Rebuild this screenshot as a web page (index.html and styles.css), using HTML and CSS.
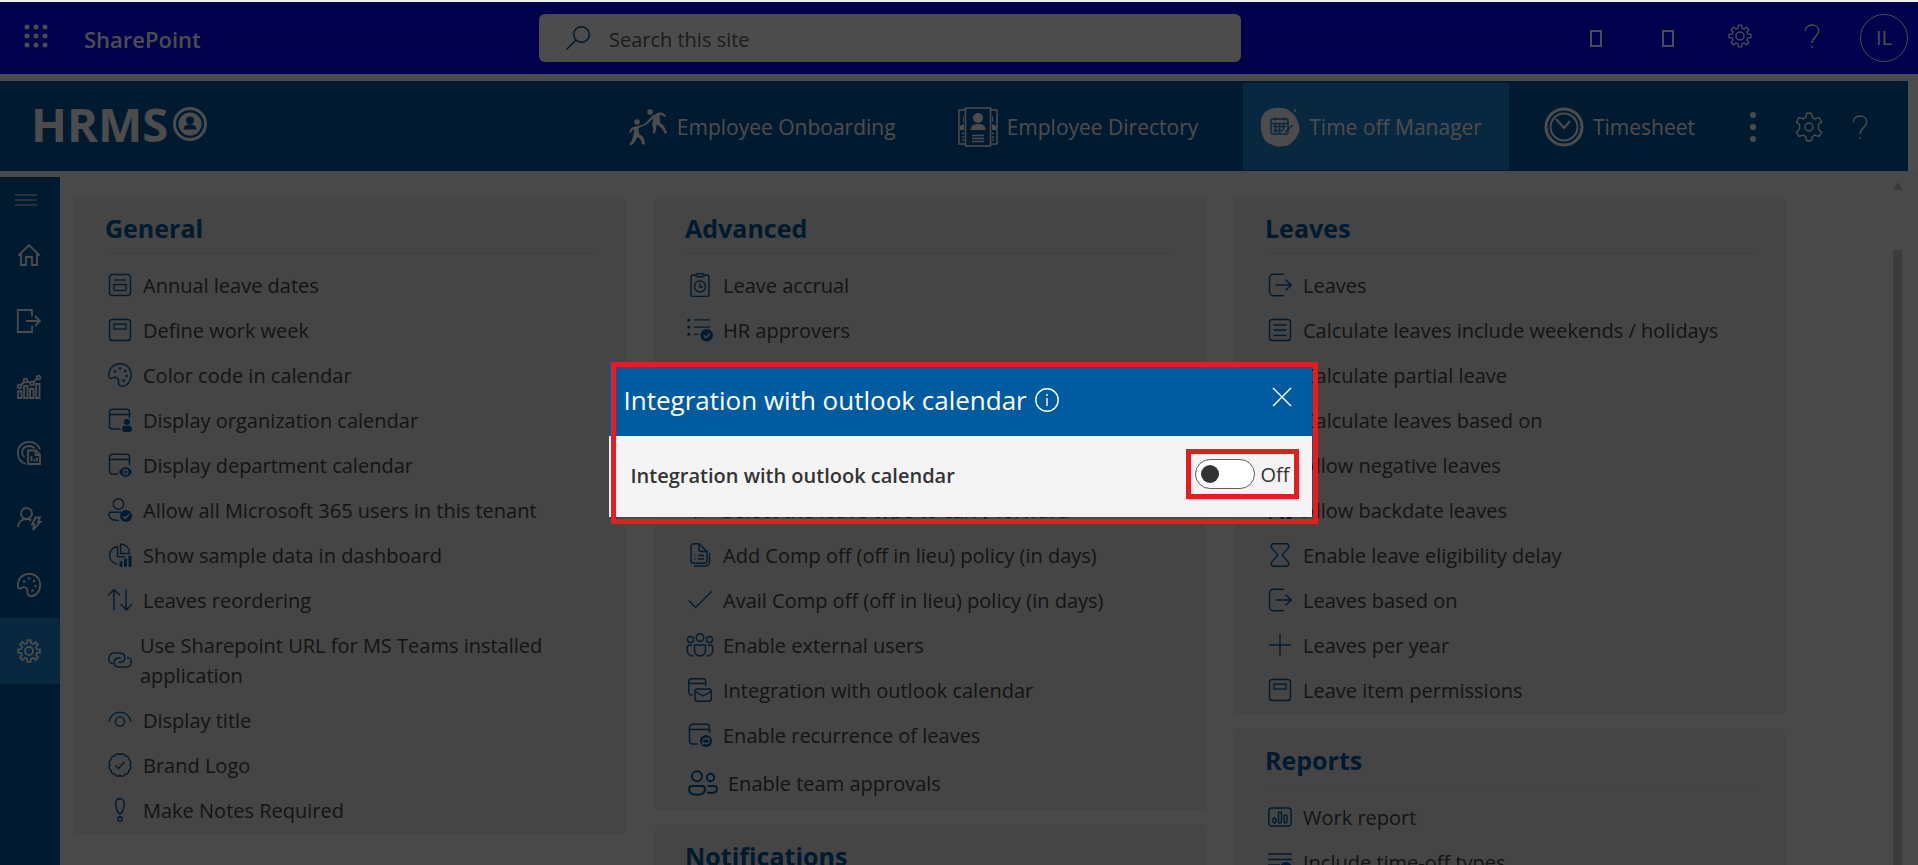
FILE: index.html
```html
<!DOCTYPE html>
<html lang="en">
<head>
<meta charset="utf-8">
<title>HRMS - Time off Manager</title>
<link rel="stylesheet" href="styles.css">
</head>
<body>
<svg class="sprite" aria-hidden="true">
  <symbol id="gear" viewBox="0 0 24 24">
    <g id="gear-teeth">
      <path id="tooth" d="M8.94 4.61L10.06 4.2L10.3 1.1H13.7L13.94 4.2L15.06 4.61"/>
      <use href="#tooth" transform="rotate(45 12 12)"/><use href="#tooth" transform="rotate(90 12 12)"/>
      <use href="#tooth" transform="rotate(135 12 12)"/><use href="#tooth" transform="rotate(180 12 12)"/>
      <use href="#tooth" transform="rotate(225 12 12)"/><use href="#tooth" transform="rotate(270 12 12)"/>
      <use href="#tooth" transform="rotate(315 12 12)"/>
    </g>
    <circle cx="12" cy="12" r="4"/>
  </symbol>
  <symbol id="cog" viewBox="0 0 30 30">
    <path d="M12.6 1.2h4.8l.9 4.2 2.6 1.5 4.1-1.3 2.6 4.2-3.2 2.9v4.600l3.2 2.9-2.6 4.2-4.1-1.3-2.6 1.5-.9 4.2h-4.8l-.9-4.2-2.6-1.5-4.1 1.3-2.6-4.2 3.2-2.9v-4.600L2.4 9.8 5 5.6l4.1 1.3 2.6-1.5z"/>
    <circle cx="15" cy="15" r="4"/>
  </symbol>
  <symbol id="help" viewBox="0 0 16 24">
    <path d="M1.2 7.2C1.2 3.5 4 1 8 1s6.8 2.500 6.800 6c0 5-6.800 6-6.800 12"/><path d="M8 22v2"/>
  </symbol>
  <symbol id="cal-box" viewBox="0 0 24 24">
    <rect x="1.500" y="1.500" width="21" height="21" rx="3"/><path d="M6 7h12"/><rect x="6" y="11.500" width="12" height="6"/>
  </symbol>
  <symbol id="cal-week" viewBox="0 0 24 24">
    <rect x="1.500" y="1.500" width="21" height="21" rx="3"/><rect x="6" y="6" width="12" height="5"/>
  </symbol>
  <symbol id="palette" viewBox="0 0 24 24">
    <path d="M.8 11.500C1 5 6 .8 12.200 .8c6.500 0 11 4.800 11 11 0 6.400-4 11.400-9 11.400-3 0-3.800-2.200-3.700-4.400.1-2.800-1-4.600-3.500-4.600-2.200 0-2.800 1.600-4.400 1.400C1.200 15.400.8 13.600.8 11.500z"/>
    <g class="solid"><circle cx="7" cy="8.500" r="1.300"/><circle cx="12" cy="5.500" r="1.300"/><circle cx="17" cy="8" r="1.300"/><circle cx="18.600" cy="13" r="1.300"/><circle cx="15.500" cy="17.500" r="1.300"/></g>
  </symbol>
  <symbol id="cal-person" viewBox="0 0 24 24">
    <path d="M12.500 21H4.500a3 3 0 0 1-3-3V4.200a3 3 0 0 1 3-3h14a3 3 0 0 1 3 3V10M1.500 6.500h20"/>
    <g class="solid"><circle cx="19" cy="14" r="3"/><rect x="14" y="17.800" width="10" height="6.200" rx="3"/></g>
  </symbol>
  <symbol id="cal-eye" viewBox="0 0 24 24">
    <path d="M10 21H4.500a3 3 0 0 1-3-3V4.200a3 3 0 0 1 3-3h14a3 3 0 0 1 3 3V12M1.500 6.500h20"/>
    <path class="solid" d="M11 19c1.400-3 3.800-4.800 6.600-4.800S22.700 16 24 19c-1.300 3-3.700 4.800-6.400 4.800S12.400 22 11 19z"/><circle class="hole" cx="17.600" cy="19" r="3"/><circle class="solid" cx="17.600" cy="19" r="1.600"/>
  </symbol>
  <symbol id="user-check" viewBox="0 0 24 24">
    <circle cx="10.500" cy="6" r="5.200"/><path d="M11 22.500C5 22.500.8 20.500.8 16.500c0-1.400.8-2.300 2.200-2.300h10"/>
    <circle class="solid" cx="18" cy="18" r="6"/><path class="inverse" d="M15 18.200l2.200 2.200 4-4.200"/>
  </symbol>
  <symbol id="pie" viewBox="0 0 24 24">
    <path d="M9.500 3.500C5 4 1.500 7.500 1.500 12c0 4.300 3 8 7.500 9M9.500 3.500v10.300H17M12.500 1v9.500h9C21.500 5 18 1.300 12.500 1z"/>
    <g class="solid"><rect x="11.500" y="18" width="3" height="6" rx="1"/><rect x="16" y="15.500" width="3" height="8.500" rx="1"/><rect x="20.500" y="12.500" width="3" height="11.500" rx="1"/></g>
  </symbol>
  <symbol id="sort" viewBox="0 0 24 24"><path d="M6 22V1.500M0 7.500l6-6 6 6M18 1v21M12.500 16l6 6 5.500-6"/></symbol>
  <symbol id="link" viewBox="0 0 24 24">
    <path d="M5 15.500C2.500 15.500.7 13.500.7 11S2.500 5 5.500 5H12c3 0 4.800 2 4.800 4.600 0 2.700-1.800 4.600-4.800 4.600h-1.500"/>
    <path d="M19 9.500c2.500 0 4.300 2 4.300 4.500s-1.800 5-4.800 5H11c-3 0-4.800-2-4.800-4.600C6.200 11.700 8 10 11 10h2"/>
  </symbol>
  <symbol id="eye" viewBox="0 0 24 24"><path d="M1.200 14C2 7.500 6.500 4.200 12 4.200S22 7.500 22.800 14"/><circle cx="12" cy="13.500" r="4.600"/></symbol>
  <symbol id="badge" viewBox="0 0 24 24">
    <path d="M12 1.800c1.500-1.600 4.200-1.200 5 .9 2.200-.2 4.100 1.700 3.900 3.900 2 .9 2.600 3.600 1.100 5.400 1.500 1.800.9 4.500-1.100 5.400.2 2.200-1.700 4.100-3.900 3.900-.8 2.100-3.500 2.500-5 .9-1.500 1.600-4.200 1.200-5-.9-2.200.2-4.100-1.700-3.900-3.900-2-.9-2.600-3.600-1.100-5.400C.5 10.200 1.100 7.500 3.100 6.600 2.900 4.400 4.800 2.500 7 2.700c.8-2.100 3.500-2.500 5-.9z"/><path d="M7.500 12.500l3 3 6-6.500"/>
  </symbol>
  <symbol id="bang" viewBox="0 0 24 24"><path d="M12 .8c-2.600 0-4.200 1.900-4.200 4.600 0 3.600 1.600 10.400 4.200 10.400s4.200-6.800 4.200-10.400C16.200 2.700 14.600.8 12 .8z"/><circle cx="12" cy="21" r="2.200"/></symbol>
  <symbol id="clip-clock" viewBox="0 0 24 24">
    <path d="M8 2H5a2 2 0 0 0-2 2v17.500a2 2 0 0 0 2 2h14a2 2 0 0 0 2-2V4a2 2 0 0 0-2-2h-3"/><rect x="8" y=".7" width="8" height="3" rx="1.500"/><circle cx="12" cy="13.500" r="5.500"/><path d="M12 10.500v3.500h3"/>
  </symbol>
  <symbol id="list-check" viewBox="0 0 27 25">
    <path d="M7 2h17M7 9.500h17M7 17h5"/><g class="solid"><circle cx="1.800" cy="2" r="1.600"/><circle cx="1.800" cy="9.500" r="1.600"/><circle cx="1.800" cy="17" r="1.600"/><circle cx="20.500" cy="18" r="6.500"/></g><path class="inverse" d="M17.500 18.300l2.300 2.300 4-4.300"/>
  </symbol>
  <symbol id="docs" viewBox="0 0 24 24">
    <path d="M11 .8H5.500a2.500 2.500 0 0 0-2.500 2.500v14.500a2.500 2.500 0 0 0 2.500 2.500h11a2.500 2.500 0 0 0 2.500-2.500V8.500zM11 .8v5.700a2 2 0 0 0 2 2h6M21.500 10v9a4 4 0 0 1-4 4H6M6.500 12.500h1M10 12.500h6M6.500 16h1M10 16h6"/>
  </symbol>
  <symbol id="check" viewBox="0 0 24 24"><path d="M.8 12.500l6.700 7L23.500 3.500"/></symbol>
  <symbol id="people" viewBox="0 0 27 24">
    <circle cx="13.500" cy="4.500" r="3.800"/><circle cx="4" cy="6.500" r="3"/><circle cx="23" cy="6.500" r="3"/>
    <path d="M8 12h11v5.500a5.500 5.500 0 0 1-11 0zM5.500 12H3a2.200 2.200 0 0 0-2.200 2.200v3.300c0 3.500 2.700 6 6.700 5.500M21.500 12H24a2.200 2.200 0 0 1 2.200 2.200v3.300c0 3.500-2.700 6-6.700 5.500"/>
  </symbol>
  <symbol id="cal-mail" viewBox="0 0 24 24">
    <path d="M4.500 17H3.500a2.700 2.700 0 0 1-2.700-2.700V3.500A2.700 2.700 0 0 1 3.500.8h11.500a2.700 2.700 0 0 1 2.700 2.700V8M.8 5.500h17"/><rect x="7" y="11" width="16.300" height="12.200" rx="2.500"/><path d="M7.500 13.500l7.500 4.500 8-4.500"/>
  </symbol>
  <symbol id="cal-sync" viewBox="0 0 24 24">
    <path d="M10 21H4.500a3 3 0 0 1-3-3V4.200a3 3 0 0 1 3-3h14a3 3 0 0 1 3 3V10M1.500 6.500h20"/><circle class="solid" cx="18" cy="18" r="6"/><path class="inverse" d="M15 17.200c1.200-2.300 4.500-2.300 6-.4v-2M21 19c-1.200 2.300-4.500 2.300-6 .4v2"/>
  </symbol>
  <symbol id="team" viewBox="0 0 30 26">
    <circle cx="9" cy="6.200" r="5"/><circle cx="22.500" cy="7.500" r="3.700"/><path d="M4 16h10a3 3 0 0 1 3 3c0 3.500-3 5.800-8 5.800S1 22.500 1 19a3 3 0 0 1 3-3zM19.500 16H26a3 3 0 0 1 3 2.700c0 2.600-2.300 4.300-6 4.300-1.500 0-2.800-.3-3.800-.8"/>
  </symbol>
  <symbol id="exit" viewBox="0 0 24 24"><path d="M16 1.200H5.500A4 4 0 0 0 1.500 5.200v13.600a4 4 0 0 0 4 4H16M7.500 12h15.700M17.500 6.500l5.700 5.500-5.700 5.500"/></symbol>
  <symbol id="lines" viewBox="0 0 24 24"><rect x="1.500" y="1.500" width="21" height="21" rx="3"/><path d="M5.500 7h13M5.500 12h13M5.500 17.500h13"/></symbol>
  <symbol id="hourglass" viewBox="0 0 24 24"><path d="M5.500.8h13a2.200 2.200 0 0 1 2.200 2.300c0 4.400-6.200 6.400-6.200 8.900s6.200 4.500 6.200 8.900a2.200 2.200 0 0 1-2.200 2.300h-13a2.200 2.200 0 0 1-2.200-2.300C3.300 16.500 9.500 14.500 9.500 12S3.300 7.500 3.300 3.100A2.200 2.200 0 0 1 5.500.8z"/></symbol>
  <symbol id="plus" viewBox="0 0 24 24"><path d="M12 1v22M1 12h22"/></symbol>
  <symbol id="chart-box" viewBox="0 0 24 24"><rect x=".8" y="3" width="22.400" height="18" rx="3"/><rect x="5" y="13" width="3" height="5" rx="1.500"/><rect x="10.500" y="7" width="3" height="11" rx="1.500"/><rect x="16" y="10" width="3" height="8" rx="1.500"/></symbol>
  <symbol id="types" viewBox="0 0 24 24"><path d="M0 4h24M0 9.500h24M0 15h12"/><circle class="solid" cx="18" cy="18" r="6"/></symbol>
</svg>

<div class="strip"></div>
<div class="app">
  <header class="topbar">
    <div class="brand">
      <button class="icon-btn" aria-label="App launcher"><svg class="waffle" viewBox="0 0 24 24"><circle cx="3" cy="3" r="2.500"/><circle cx="12" cy="3" r="2.500"/><circle cx="21" cy="3" r="2.500"/><circle cx="3" cy="12" r="2.500"/><circle cx="12" cy="12" r="2.500"/><circle cx="21" cy="12" r="2.500"/><circle cx="3" cy="21" r="2.500"/><circle cx="12" cy="21" r="2.500"/><circle cx="21" cy="21" r="2.500"/></svg></button>
      <a class="brand-name" href="#">SharePoint</a>
    </div>
    <label class="search">
      <svg class="search-icon" viewBox="0 0 24 24"><circle cx="15.500" cy="8.500" r="7.800"/><path d="M10 14L.5 23.500"/></svg>
      <input class="search-input" type="search" placeholder="Search this site" aria-label="Search this site">
    </label>
    <div class="top-actions">
      <button class="icon-btn" aria-label="Chat"><svg class="blank-glyph" viewBox="0 0 12 17"><rect x="1" y="1" width="10" height="15"/></svg></button>
      <button class="icon-btn" aria-label="Announcements"><svg class="blank-glyph" viewBox="0 0 12 17"><rect x="1" y="1" width="10" height="15"/></svg></button>
      <button class="icon-btn raised" aria-label="Settings"><svg class="i24"><use href="#gear"/></svg></button>
      <button class="icon-btn raised" aria-label="Help"><svg class="i-help"><use href="#help"/></svg></button>
      <button class="avatar">IL</button>
    </div>
  </header>

  <div class="hr-bar">
    <a class="logo" href="#">HRMS
      <svg class="logo-mark" viewBox="0 0 34 34"><circle cx="17" cy="17" r="15.500"/><circle class="logo-disc" cx="17" cy="17" r="11.500"/><circle class="logo-person" cx="17" cy="13.500" r="4"/><path class="logo-person" d="M10.500 22.500c0-3.500 2.500-5 6.500-5s6.500 1.500 6.500 5z"/></svg>
    </a>
    <nav class="nav">
      <a class="nav-item" href="#"><svg class="nav-icon" viewBox="0 0 40 40"><g class="solid"><circle cx="22" cy="5" r="2.800"/><circle cx="9" cy="15" r="2.800"/><path d="M24 9l6-3.200c4-.8 6.500.4 8 3.200l-1.200 1.200C35 8.500 33.500 8 31.500 8.500l.5 7c3 1.800 5 5 7.200 10.500l-2.400.8C35 22.500 33 20 29.500 18l-1.500.5c.5 2.500.3 5-1.200 8l-2.300-.8c1-3 .8-5-.5-8l1.500-6.500-6.500 6c-3 1.500-6 2.500-8.500 4l.8 6c3.500 1.500 5.200 4.500 5.700 10l-2.800.3c-.7-4-2-6.300-5-7.500-1.300 4-3 6.500-6.200 8.500L1.200 37c3-3 4-6 5-15-2 .8-2.700 2-3 4l-1.700-.3C1.500 22 4 19.500 9 19.200c3-.2 6-1.700 9-3.700z"/></g></svg>Employee Onboarding</a>
      <a class="nav-item" href="#"><svg class="nav-icon" viewBox="0 0 40 40"><path class="thin" d="M7 3H1v34h6M33 3h6v34h-6"/><rect class="thin" x="7.500" y="1" width="25" height="38"/><g class="solid"><circle cx="20" cy="11" r="5"/><path d="M12.500 23c0-4 2.500-6 7.500-6s7.500 2 7.500 6z"/><path d="M2 23v-4l4-2v6zM38 23v-4l-4-2v6zM5 9.500h1v5H5zM34 9.500h1v5h-1z"/></g><path class="thin" d="M14 28.500h12M14 31.500h12M14 34.500h12M4 26.500h2M4 30h2M4 33h2M34 26.500h2M34 30h2M34 33h2"/></svg>Employee Directory</a>
      <a class="nav-item nav-active" href="#"><svg class="nav-icon" viewBox="0 0 40 40"><path class="solid" d="M12 1.500C16 .5 26 0 31 5c5 4 8 10 8.500 17-.5 6-5 12-11 16-6 2-14 2-18-1C4 35 2 29 1 22 0 14 1 4 12 1.500z"/><circle class="solid" cx="35" cy="3.500" r="1.200"/><g class="on-light"><rect x="11" y="12" width="17" height="15" rx="2"/><path d="M11 16.500h17M15 10.500v3M24 10.500v3M13 19.500h13M13 23.500h10M15.500 17v9M19.500 17v9M23.500 17v6M33 18l-8 7"/></g></svg>Time off Manager</a>
      <a class="nav-item" href="#"><svg class="nav-icon" viewBox="0 0 40 40"><circle class="ring" cx="20" cy="20" r="18"/><circle class="ring-in" cx="20" cy="20" r="13.500"/><path class="ring-in" d="M12 12l8 9 6-7"/></svg>Timesheet</a>
      <button class="icon-btn more" aria-label="More"><svg class="dots" viewBox="0 0 8 30"><circle cx="4" cy="3" r="3"/><circle cx="4" cy="15" r="3"/><circle cx="4" cy="27" r="3"/></svg></button>
      <button class="icon-btn" aria-label="App settings"><svg class="i30"><use href="#cog"/></svg></button>
      <button class="icon-btn" aria-label="App help"><svg class="i-help"><use href="#help"/></svg></button>
    </nav>
  </div>

  <div class="body">
    <nav class="side" aria-label="Sections">
      <button class="side-toggle" aria-label="Toggle menu"><svg class="burger" viewBox="0 0 22 12"><path d="M0 1h22M0 6h22M0 11h22"/></svg></button>
      <a class="side-item" href="#" aria-label="Home"><svg class="i24" viewBox="0 0 24 24"><path d="M1.500 12.500L12 2l10.500 10.500M4 10.500V22h5v-8h6v8h5V10.500"/></svg></a>
      <a class="side-item" href="#" aria-label="Leaves"><svg class="i24" viewBox="0 0 24 24"><path d="M15 7.500V1H.8v22H15v-6.500M9 12h14M18 7l5 5-5 5"/></svg></a>
      <a class="side-item" href="#" aria-label="Analytics"><svg class="i24" viewBox="0 0 24 24"><path d="M1 23v-6.500h3.500V23zM7 23V11h3.500v12zM13 23v-9h3.500v9zM19 23V9h3.500v14z"/><circle cx="2.500" cy="11.500" r="1.800"/><circle cx="8.500" cy="5.500" r="1.800"/><circle cx="15" cy="8.500" r="1.800"/><circle cx="21.500" cy="2.500" r="1.800"/><path d="M4 10l3-3M10.500 6.500l3 1.500M16.500 7l3.500-3.500"/></svg></a>
      <a class="side-item" href="#" aria-label="Reports"><svg class="i24" viewBox="0 0 24 24"><path d="M9 23C4 21.500.8 17.500.8 12 .8 5.500 5.500.8 12 .8c5.500 0 9.500 3 11 8M7.500 16C6 15 5 13.500 5 11.500 5 7.500 8 5 12 5c2.500 0 4.500 1 5.500 2.500M12 9.500h7l4 4V23H11V9.500zM18.500 9.500v4.500H23M14.500 20.500V15M17.500 20.500V18M20 20.500v-4"/></svg></a>
      <a class="side-item" href="#" aria-label="Users"><svg class="i24" viewBox="0 0 24 24"><circle cx="9.500" cy="6.500" r="5.500"/><path d="M1 20c0-5 3.500-8 8.500-8 2 0 3.500.5 4.500 1.500M18.500 10.500h4.500l-2 4.500h2.500L16 23l1.500-5.500H15z"/></svg></a>
      <a class="side-item" href="#" aria-label="Theme"><svg class="i24"><use href="#palette"/></svg></a>
      <a class="side-item side-active" href="#" aria-label="Settings"><svg class="i24"><use href="#gear"/></svg></a>
    </nav>

    <main class="content">
      <div class="column">
        <section class="card">
          <h2 class="card-title">General</h2>
          <ul class="items">
            <li class="item"><svg class="item-icon"><use href="#cal-box"/></svg><a href="#">Annual leave dates</a></li>
            <li class="item"><svg class="item-icon"><use href="#cal-week"/></svg><a href="#">Define work week</a></li>
            <li class="item"><svg class="item-icon"><use href="#palette"/></svg><a href="#">Color code in calendar</a></li>
            <li class="item"><svg class="item-icon"><use href="#cal-person"/></svg><a href="#">Display organization calendar</a></li>
            <li class="item"><svg class="item-icon"><use href="#cal-eye"/></svg><a href="#">Display department calendar</a></li>
            <li class="item"><svg class="item-icon"><use href="#user-check"/></svg><a href="#">Allow all Microsoft 365 users in this tenant</a></li>
            <li class="item"><svg class="item-icon"><use href="#pie"/></svg><a href="#">Show sample data in dashboard</a></li>
            <li class="item"><svg class="item-icon"><use href="#sort"/></svg><a href="#">Leaves reordering</a></li>
            <li class="item item-tight"><svg class="item-icon"><use href="#link"/></svg><a href="#">Use Sharepoint URL for MS Teams installed application</a></li>
            <li class="item"><svg class="item-icon"><use href="#eye"/></svg><a href="#">Display title</a></li>
            <li class="item"><svg class="item-icon"><use href="#badge"/></svg><a href="#">Brand Logo</a></li>
            <li class="item"><svg class="item-icon"><use href="#bang"/></svg><a href="#">Make Notes Required</a></li>
          </ul>
        </section>
      </div>
      <div class="column">
        <section class="card">
          <h2 class="card-title">Advanced</h2>
          <ul class="items">
            <li class="item"><svg class="item-icon"><use href="#clip-clock"/></svg><a href="#">Leave accrual</a></li>
            <li class="item"><svg class="item-icon"><use href="#list-check"/></svg><a href="#">HR approvers</a></li>
            <li class="item item-after-gap"><svg class="item-icon"><use href="#check"/></svg><a href="#">Select the leave type to carry forward</a></li>
            <li class="item"><svg class="item-icon"><use href="#docs"/></svg><a href="#">Add Comp off (off in lieu) policy (in days)</a></li>
            <li class="item"><svg class="item-icon"><use href="#check"/></svg><a href="#">Avail Comp off (off in lieu) policy (in days)</a></li>
            <li class="item"><svg class="item-icon"><use href="#people"/></svg><a href="#">Enable external users</a></li>
            <li class="item"><svg class="item-icon"><use href="#cal-mail"/></svg><a href="#">Integration with outlook calendar</a></li>
            <li class="item"><svg class="item-icon"><use href="#cal-sync"/></svg><a href="#">Enable recurrence of leaves</a></li>
            <li class="item item-large"><svg class="item-icon"><use href="#team"/></svg><a href="#">Enable team approvals</a></li>
          </ul>
        </section>
        <section class="card">
          <h2 class="card-title">Notifications</h2>
        </section>
      </div>
      <div class="column">
        <section class="card">
          <h2 class="card-title">Leaves</h2>
          <ul class="items">
            <li class="item"><svg class="item-icon"><use href="#exit"/></svg><a href="#">Leaves</a></li>
            <li class="item"><svg class="item-icon"><use href="#lines"/></svg><a href="#">Calculate leaves include weekends / holidays</a></li>
            <li class="item"><svg class="item-icon"><use href="#lines"/></svg><a href="#">Calculate partial leave</a></li>
            <li class="item"><svg class="item-icon"><use href="#lines"/></svg><a href="#">Calculate leaves based on</a></li>
            <li class="item"><svg class="item-icon"><use href="#user-check"/></svg><a href="#">Allow negative leaves</a></li>
            <li class="item"><svg class="item-icon"><use href="#user-check"/></svg><a href="#">Allow backdate leaves</a></li>
            <li class="item"><svg class="item-icon"><use href="#hourglass"/></svg><a href="#">Enable leave eligibility delay</a></li>
            <li class="item"><svg class="item-icon"><use href="#exit"/></svg><a href="#">Leaves based on</a></li>
            <li class="item"><svg class="item-icon"><use href="#plus"/></svg><a href="#">Leaves per year</a></li>
            <li class="item"><svg class="item-icon"><use href="#cal-week"/></svg><a href="#">Leave item permissions</a></li>
          </ul>
        </section>
        <section class="card">
          <h2 class="card-title">Reports</h2>
          <ul class="items">
            <li class="item"><svg class="item-icon"><use href="#chart-box"/></svg><a href="#">Work report</a></li>
            <li class="item"><svg class="item-icon"><use href="#types"/></svg><a href="#">Include time-off types</a></li>
          </ul>
        </section>
      </div>
      <div class="scroll"><span class="scroll-up"></span><span class="scroll-thumb"></span></div>
    </main>
  </div>

  <div class="overlay">
    <div class="dialog" role="dialog" aria-labelledby="dialog-title">
      <div class="dialog-head">
        <h1 class="dialog-title" id="dialog-title">Integration with outlook calendar</h1>
        <button class="icon-btn" aria-label="Information"><svg class="i24" viewBox="0 0 24 24"><circle cx="12" cy="12" r="11.200"/><path d="M12 10v8"/><path d="M12 6v2"/></svg></button>
        <button class="icon-btn dialog-close" aria-label="Close"><svg class="i-close" viewBox="0 0 18 18"><path d="M0 0l18 18M18 0L0 18"/></svg></button>
      </div>
      <div class="dialog-body">
        <label class="setting" for="outlook">Integration with outlook calendar</label>
        <div class="switch-frame">
          <input class="switch" type="checkbox" role="switch" id="outlook"><span class="switch-state">Off</span>
        </div>
      </div>
      <div class="highlight"></div>
    </div>
  </div>
</div>
</body>
</html>
```
FILE: styles.css
```css
* { box-sizing: border-box; }
html, body { height: 100%; margin: 0; }
body {
  display: flex;
  flex-direction: column;
  overflow: hidden;
  background: #fff;
  color: #444;
  font: 20px/30px "Segoe UI", "Open Sans", sans-serif;
}
a { color: inherit; text-decoration: none; }
svg { display: block; flex: none; overflow: visible; fill: none; stroke: currentColor; stroke-width: 1.4; }
.sprite { position: absolute; width: 0; height: 0; }
.solid { fill: currentColor; stroke: none; }
.hole { fill: #e6e6e6; stroke: none; }
.inverse { stroke: #e6e6e6; stroke-width: 1.6; }
.i24 { width: 24px; height: 24px; }
.i30 { width: 30px; height: 30px; }
.i-help { width: 16px; height: 24px; }
.i-close { width: 18px; height: 18px; }
.icon-btn { padding: 0; border: 0; background: none; color: inherit; }

.strip { flex: none; height: 2px; background: #ececf8; }
.app { position: relative; flex: 1; min-height: 0; display: flex; flex-direction: column; overflow: hidden; }

.topbar {
  flex: none;
  display: grid;
  grid-template-columns: 28.1% 36.6% 1fr;
  align-items: center;
  height: 72px;
  background: #00f;
  color: #fff;
}
.brand { display: flex; align-items: center; gap: 36px; padding-left: 24px; }
.waffle { width: 24px; height: 24px; fill: #fff; stroke: none; }
.brand .icon-btn, .raised { padding-bottom: 4px; }
.brand-name { padding-top: 2px; font-size: 22px; font-weight: 600; }
.search { display: flex; align-items: center; height: 48px; padding-left: 27px; gap: 19px; border-radius: 6px; background: #fff; color: #004578; }
.search-icon { width: 24px; height: 24px; }
.search-input { flex: 1; padding: 3px 0 0; border: 0; outline: 0; background: none; font: inherit; color: #605e5c; }
.search-input::placeholder { color: #605e5c; opacity: 1; }
.top-actions { display: flex; align-items: center; justify-content: flex-end; padding-right: 10px; }
.top-actions .icon-btn { display: flex; justify-content: center; width: 72px; }
.blank-glyph { width: 12px; height: 17px; stroke-width: 2; }
.avatar { width: 48px; height: 48px; margin-left: 12px; padding: 0; border: 1px solid #fff; border-radius: 50%; background: none; color: #fff; font: inherit; }

.hr-bar { flex: none; display: flex; justify-content: space-between; align-items: center; height: 90px; margin: 7px 10px 0 0; padding: 2px 40px 1px 31px; background: #005a9e; color: #fff; }
.logo { display: flex; align-items: center; gap: 5px; padding-bottom: 5px; font-size: 47px; font-weight: 700; }
.logo-mark { width: 34px; height: 34px; stroke-width: 3; }
.logo-disc { fill: #fff; stroke: none; }
.logo-person { fill: #005a9e; stroke: none; }
.nav { display: flex; align-items: center; align-self: stretch; }
.nav-item { display: flex; align-items: center; gap: 9px; align-self: stretch; padding: 0 27px 0 17px; margin-right: 18px; font-size: 21px; }
.nav-active { background: #1a86d0; }
.nav-icon { width: 40px; height: 40px; }
.thin { stroke-width: 1.5; }
.ring { stroke-width: 3; }
.ring-in { stroke-width: 2; }
.on-light { stroke: #1a86d0; stroke-width: 1.5; }
.more { margin: 0 37px 0 9px; }
.dots { width: 8px; height: 30px; fill: #fff; stroke: none; }
.nav .i-help { margin-left: 28px; }

.body { flex: 1; min-height: 0; display: flex; background: #f4f4f4; }
.side { flex: none; width: 60px; margin-top: 6px; background: #005a9e; color: #fff; }
.side-toggle { display: block; height: 45px; padding: 0 0 0 15px; border: 0; background: none; color: inherit; }
.burger { width: 22px; height: 12px; stroke-width: 1; }
.side-item { display: flex; align-items: center; height: 66px; padding-left: 17px; }
.side-item svg { stroke-width: 1.8; }
.side-active { background: #1a86d0; }

.content { flex: 1; display: flex; align-items: flex-start; gap: 30px; padding: 26px 0 0 15px; }
.column { flex: 1 1 550px; display: flex; flex-direction: column; gap: 15px; }
.card { background: #e6e6e6; padding: 0 30px; }
.card-title { margin: 0 0 10px; padding: 16px 0 10px; border-bottom: 1px solid #d8d8d8; color: #005a9e; font-size: 25px; line-height: 30px; font-weight: 700; }
.items { list-style: none; margin: 0; padding: 0; }
.item { display: flex; align-items: center; gap: 8px; padding: 7px 0 8px; }
.item-icon { width: 30px; height: 24px; margin-bottom: 2px; color: #005a9e; }
.item-tight { gap: 5px; }
.item-after-gap { margin-top: 135px; }
.item-large { padding: 10px 0 11px; gap: 7px; }
.item-large .item-icon { width: 36px; height: 26px; stroke-width: 2; }
.scroll { align-self: stretch; width: 25px; margin: -20px 0 0 78px; display: flex; flex-direction: column; gap: 60px; }
.scroll-up { width: 10px; margin-top: 5px; border: 5px solid transparent; border-top: 0; border-bottom: 8px solid #c4c4c4; }
.scroll-thumb { flex: 1; width: 9px; background: #c8c8c8; }

.overlay { position: absolute; inset: 0; display: flex; align-items: center; justify-content: center; padding: 12px 0 0 2px; background: rgba(0, 0, 0, .7); }
.dialog { position: relative; width: 703px; background: #f4f4f4; color: #333; }
.dialog-head { display: flex; align-items: center; gap: 8px; height: 73px; padding: 2px 21px 0 15px; background: #005ba1; color: #fff; }
.dialog-title { margin: 0; font-size: 26px; font-weight: 400; }
.dialog-close { margin-left: auto; padding-bottom: 6px; }
.dialog-body { display: flex; align-items: center; justify-content: space-between; height: 81px; padding: 0 13px 4px 22px; }
.setting { padding-top: 4px; font-weight: 600; }
.switch-frame { display: flex; align-items: center; gap: 5px; height: 50px; padding: 0 4px; border: 5px solid #e81c1c; }
.switch { appearance: none; flex: none; width: 60px; height: 30px; margin: 0; padding: 5px; border: 1px solid #605e5c; border-radius: 15px; background: #fff; }
.switch::before { content: ""; display: block; width: 18px; height: 18px; border-radius: 50%; background: #333; }
.switch-state { padding-top: 2px; }
.highlight { position: absolute; inset: -1px -6px -7px 2px; border: 5px solid #e81c1c; pointer-events: none; }
```
